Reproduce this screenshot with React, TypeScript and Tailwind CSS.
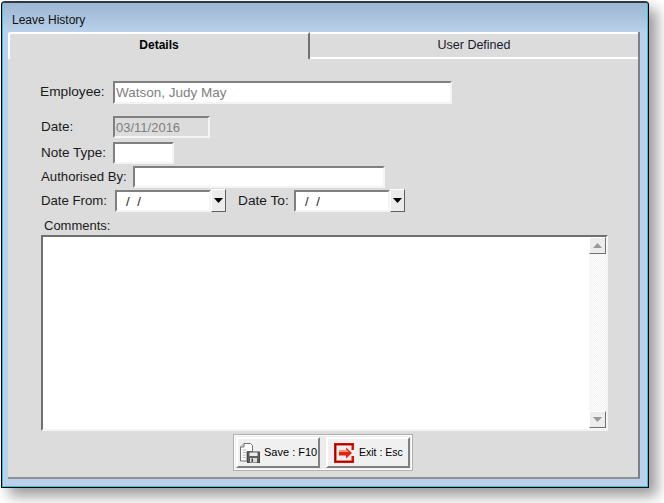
function Field({ w, h = 22, bg = "bg-white", className = "", children }: { w: number; h?: number; bg?: string; className?: string; children?: React.ReactNode }) {
  return (
    <div
      style={{ width: w, height: h }}
      className={`shrink-0 border-2 border-t-[#808080] border-l-[#808080] border-r-[#f4f4f4] border-b-[#f4f4f4] flex items-center leading-none whitespace-nowrap ${bg} ${className}`}
    >
      {children}
    </div>
  );
}

function Drop() {
  return (
    <div className="w-[15px] h-[23px] shrink-0 -mt-[2px] bg-[#ececec] border border-t-white border-l-white border-r-[#606060] border-b-[#606060] flex items-center justify-center">
      <svg width="9" height="5" viewBox="0 0 9 5"><path d="M0 0h9L4.500 5z" fill="#000" /></svg>
    </div>
  );
}

function SaveIcon() {
  return (
    <svg className="shrink-0" width="20" height="20" viewBox="0 0 20 20">
      <path d="M.5 4 4 .5h6.500l2 2v6H7v9.500H.5z" fill="#fff" stroke="#707070" />
      <path d="M4 .5V4H.5" fill="#e0e0e0" stroke="#707070" />
      <path d="M2.500 7h4M2.500 9.500h4M2.500 12h4M2.500 14.500h3" stroke="#b8b8b8" />
      <rect x="7.500" y="9" width="12" height="10.500" fill="#606060" stroke="#484848" />
      <rect x="9.500" y="9.500" width="8" height="3.500" fill="#ececec" />
      <rect x="10" y="15" width="7" height="4.500" fill="#dcdcdc" />
      <rect x="11.500" y="15.500" width="1.500" height="3.500" fill="#484848" />
    </svg>
  );
}

function ExitIcon() {
  return (
    <svg className="shrink-0" width="20" height="20" viewBox="0 0 20 20">
      <path d="M0 0h20v7h-2.500V2.500h-15v15h15V13H20v7H0z" fill="#e01000" />
      <path d="M1 1h18v1H2v16h17v1H1z" fill="#a00000" />
      <path d="M5 7.500h7V4.500l6 5.500-6 5.500v-3H5z" fill="#e82010" />
      <path d="M5 7.500h7V6l3 3H5z" fill="#ff9080" />
    </svg>
  );
}

function Btn({ icon, label, className }: { icon: React.ReactNode; label: string; className: string }) {
  return (
    <div className={`w-[84px] h-[31px] bg-[#f0f0f0] border-2 border-t-white border-l-white border-r-[#808080] border-b-[#808080] flex items-center text-black whitespace-nowrap ${className}`}>
      {icon}
      <span>{label}</span>
    </div>
  );
}

export default function App() {
  return (
    <div className="w-[664px] h-[503px] bg-white overflow-hidden font-['Liberation_Sans',Arial,sans-serif] text-[13.5px] text-[#1a1a1a]">
      <div className="ml-[1px] mt-[1px] w-[648px] h-[487px] rounded-t-[4px] border-t-2 border-x border-b border-t-[#303840] border-x-black border-b-black px-[1px] pb-[1px] shadow-[8px_8px_14px_rgba(0,0,0,0.4),inset_-1px_-1px_0_#30c4dc,inset_1px_0_0_#30c4dc] bg-[#b9d1ea] flex flex-col">
        <div className="h-[29px] shrink-0 bg-gradient-to-b from-[#9db6d2] to-[#b9d1ea] pl-[9px] pt-[8px] text-[12px] leading-[18px] text-[#111]">
          Leave History
        </div>
        <div className="mx-[5px] w-[632px] h-[447px] bg-[#dcdcdc] border-r-2 border-b-2 border-r-[#808080] border-b-[#909090] flex flex-col">
          <div className="h-[27px] shrink-0 flex">
            <div className="w-[302px] h-[27px] pb-[3px] border-t-2 border-l-2 border-t-white border-l-white rounded-tl-[3px] border-r-2 border-r-[#707070] flex items-center justify-center font-bold text-[12px] text-black">
              Details
            </div>
            <div className="flex-1 border-t-2 border-t-white border-b-2 border-b-white flex items-center justify-center text-[12.5px] text-[#1a1a2a]">
              User Defined
            </div>
          </div>

          <div className="flex flex-col pl-[33px]">
            <div className="flex items-center mt-[22px] h-[23px]">
              <span className="w-[72px] shrink-0 -ml-[1px] mr-[1px] pb-[1px] text-[13.7px] whitespace-nowrap">Employee:</span>
              <Field w={339} h={23} className="text-[#808080] text-[13.5px] pl-[1px]">Watson, Judy May</Field>
            </div>
            <div className="flex items-center mt-[12px] h-[22px]">
              <span className="w-[72px] shrink-0 whitespace-nowrap">Date:</span>
              <Field w={97} bg="bg-[#dcdcdc]" className="text-[#808080] text-[13px] pl-[1px]">03/11/2016</Field>
            </div>
            <div className="flex items-center mt-[4px] h-[22px]">
              <span className="w-[72px] shrink-0 whitespace-nowrap">Note Type:</span>
              <Field w={61} />
            </div>
            <div className="flex items-center mt-[2px] h-[22px]">
              <span className="w-[92px] shrink-0 text-[13.2px] whitespace-nowrap">Authorised By:</span>
              <Field w={252} />
            </div>
            <div className="flex items-center mt-[2px] h-[22px]">
              <span className="w-[74px] shrink-0 text-[13.2px] whitespace-nowrap">Date From:</span>
              <Field w={96} className="text-[#222] pl-[9px] text-[13px] [word-spacing:4px]">/ /</Field>
              <Drop />
              <span className="ml-[12px] w-[56px] shrink-0 text-[13.7px] whitespace-nowrap">Date To:</span>
              <Field w={96} className="text-[#222] pl-[9px] text-[13px] [word-spacing:4px]">/ /</Field>
              <Drop />
            </div>
            <div className="mt-[5px] pl-[3px] h-[18px] leading-[18px] text-[13px]">Comments:</div>
            <div className="w-[567px] h-[196px] bg-white border-2 border-t-[#707070] border-l-[#707070] border-r-[#f4f4f4] border-b-[#f4f4f4] flex justify-end">
              <div className="w-[17px] flex flex-col bg-[repeating-conic-gradient(#f0f0f0_0%_25%,#ffffff_0%_50%)] bg-[length:2px_2px]">
                <div className="w-[17px] h-[17px] bg-[#ececec] border border-t-white border-l-white border-r-[#707070] border-b-[#707070] flex items-center justify-center">
                  <svg width="9" height="5" viewBox="0 0 9 5"><path d="M0 5h9L4.500 0z" fill="#999" /></svg>
                </div>
                <div className="flex-1" />
                <div className="w-[17px] h-[17px] mb-[1px] bg-[#ececec] border border-t-white border-l-white border-r-[#707070] border-b-[#707070] flex items-center justify-center">
                  <svg width="9" height="5" viewBox="0 0 9 5"><path d="M0 0h9L4.500 5z" fill="#999" /></svg>
                </div>
              </div>
            </div>
          </div>

          <div className="flex justify-center mt-[3px]">
            <div className="w-[180px] h-[37px] bg-[#ececec] border border-[#b0b0b0] flex items-center gap-[6px] px-[2px] shadow-[inset_0_0_0_1px_#ffffff]">
              <Btn icon={<SaveIcon />} label="Save : F10" className="pl-[2px] gap-[4px] text-[11px]" />
              <Btn icon={<ExitIcon />} label="Exit : Esc" className="pl-[6px] gap-[5px] text-[10.5px]" />
            </div>
          </div>
        </div>
      </div>
    </div>
  );
}
